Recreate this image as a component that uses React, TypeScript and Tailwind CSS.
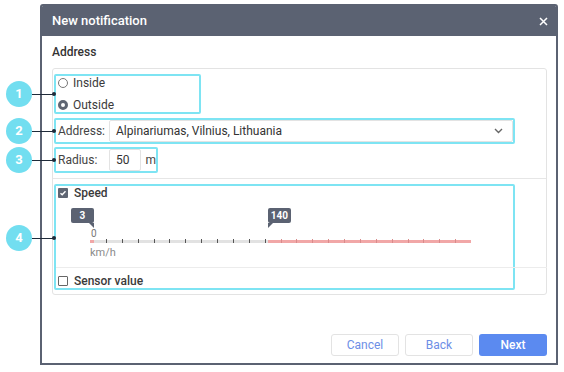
import React from 'react';

const MAX_SPEED = 300;
const SPEED_FROM = 3;
const SPEED_TO = 140;
const TICKS = 24;

const callouts = [
  { n: 1, y: 94 },
  { n: 2, y: 131 },
  { n: 3, y: 160 },
  { n: 4, y: 238 },
];

function Radio({ checked, label }: { checked?: boolean; label: string }) {
  return (
    <div className="flex h-[14px] items-center gap-[5px]">
      {checked ? (
        <span className="h-[10px] w-[10px] rounded-full border-[3px] border-[#5f6673] bg-white" />
      ) : (
        <span className="h-[10px] w-[10px] rounded-full border border-[#777] bg-white" />
      )}
      <span className="text-[12px] text-[#3a3a3a]">{label}</span>
    </div>
  );
}

function Checkbox({ checked, label }: { checked?: boolean; label: string }) {
  return (
    <div className="flex h-[14px] items-center gap-[6px]">
      {checked ? (
        <span className="flex h-[10px] w-[10px] items-center justify-center rounded-[1px] bg-[#5f6673]">
          <svg width="8" height="8" viewBox="0 0 8 8">
            <path d="M1.5 4.2 L3.2 5.8 L6.5 2.3" fill="none" stroke="#fff" strokeWidth="1.4" />
          </svg>
        </span>
      ) : (
        <span className="h-[10px] w-[10px] rounded-[1px] border border-[#666] bg-white" />
      )}
      <span className="text-[12px] font-medium text-[#3a3a3a]">{label}</span>
    </div>
  );
}

function SpeedSlider() {
  const fromPct = (SPEED_FROM / MAX_SPEED) * 100;
  const toPct = (SPEED_TO / MAX_SPEED) * 100;

  return (
    <div className="relative ml-[32px] h-[67px] w-[381px]">
      {/* from tooltip */}
      <div className="absolute top-[8px]" style={{ right: `${100 - fromPct}%` }}>
        <div className="h-[15px] min-w-[23px] rounded-[2px] bg-[#5b6272] px-[3px] text-center text-[10px] font-bold leading-[15px] text-white">
          {SPEED_FROM}
        </div>
        <div className="ml-auto h-0 w-0 border-l-[5px] border-t-[5px] border-l-transparent border-t-[#5b6272]" />
      </div>
      {/* to tooltip */}
      <div className="absolute top-[8px]" style={{ left: `${toPct}%` }}>
        <div className="h-[15px] min-w-[23px] rounded-[2px] bg-[#5b6272] px-[3px] text-center text-[10px] font-bold leading-[15px] text-white">
          {SPEED_TO}
        </div>
        <div className="h-0 w-0 border-r-[5px] border-t-[5px] border-r-transparent border-t-[#5b6272]" />
      </div>

      <span className="absolute left-[1px] top-[28px] text-[10px] leading-[12px] text-[#777]">0</span>

      <div className="absolute left-0 right-0 top-[40px] h-[3px] bg-[#e2e2e2]">
        <div className="absolute left-0 top-0 h-full bg-[#f1a7a7]" style={{ width: `${fromPct}%` }} />
        <div className="absolute right-0 top-0 h-full bg-[#f1a7a7]" style={{ left: `${toPct}%` }} />
        {Array.from({ length: TICKS - 1 }, (_, i) => {
          const pos = ((i + 1) / TICKS) * 100;
          const onRed = pos > toPct;
          return (
            <span
              key={i}
              className={
                onRed
                  ? 'absolute top-[-1px] h-[4px] w-px bg-[#d98b8b]'
                  : 'absolute top-[-1px] h-[4px] w-px bg-[#555]'
              }
              style={{ left: `${pos}%` }}
            />
          );
        })}
      </div>

      <span className="absolute left-0 top-[46px] text-[11px] leading-[13px] text-[#8a8a8a]">km/h</span>
    </div>
  );
}

export default function App() {
  return (
    <div
      className="relative h-[372px] w-[564px] overflow-hidden bg-white pl-[40px] pt-[4px]"
      style={{ fontFamily: 'Roboto, "Liberation Sans", sans-serif' }}
    >
      <div className="flex h-[361px] w-[518px] flex-col overflow-hidden rounded-t-[3px] border-2 border-[#5b6272]">
        {/* header */}
        <div className="flex h-[30px] shrink-0 items-center justify-between bg-[#5b6272] pl-[10px] pr-[8px]">
          <span className="text-[13px] font-medium text-white">New notification</span>
          <svg width="9" height="9" viewBox="0 0 9 9">
            <path d="M1 1 L8 8 M8 1 L1 8" stroke="#fff" strokeWidth="1.5" />
          </svg>
        </div>

        <div className="flex flex-1 flex-col bg-white pl-[10px] pr-[9px]">
          <div className="mb-[8px] mt-[8px] h-[16px] text-[12px] font-medium leading-[16px] text-[#333]">
            Address
          </div>

          <div className="flex flex-col rounded-[3px] border border-[#e3e3e3] pb-[4px] pt-[5px]">
            {/* 1 */}
            <div className="ml-[1px] flex h-[40px] w-[147px] flex-col justify-center gap-[8px] rounded-[2px] border-2 border-[#7ee4f3] pl-[2px]">
              <Radio label="Inside" />
              <Radio checked label="Outside" />
            </div>

            {/* 2 */}
            <div className="ml-[1px] mt-[4px] flex h-[26px] w-[461px] items-center rounded-[2px] border-2 border-[#7ee4f3] pl-[2px]">
              <span className="w-[51px] shrink-0 text-[12px] text-[#444]">Address:</span>
              <div className="flex h-[22px] flex-1 items-center justify-between rounded-[2px] border border-[#e3e3e3] pl-[6px] pr-[9px]">
                <span className="text-[12px] text-[#333]">Alpinariumas, Vilnius, Lithuania</span>
                <svg width="9" height="6" viewBox="0 0 9 6">
                  <path d="M1 1 L4.5 4.5 L8 1" fill="none" stroke="#666" strokeWidth="1.4" />
                </svg>
              </div>
            </div>

            {/* 3 */}
            <div className="ml-[1px] mt-[3px] flex h-[26px] w-[104px] items-center rounded-[2px] border-2 border-[#7ee4f3] pl-[2px]">
              <span className="w-[51px] shrink-0 text-[12px] text-[#444]">Radius:</span>
              <div className="flex h-[22px] w-[34px] items-center rounded-[2px] border border-[#e3e3e3] pl-[6px]">
                <span className="text-[12px] text-[#333]">50</span>
              </div>
              <span className="ml-[4px] text-[12px] text-[#444]">m</span>
            </div>

            <div className="mt-[5px] h-px bg-[#e6e6e6]" />

            {/* 4 */}
            <div className="ml-[1px] mt-[5px] flex w-[461px] flex-col rounded-[2px] border-2 border-[#7ee4f3] pl-[2px]">
              <Checkbox checked label="Speed" />
              <SpeedSlider />
              <div className="-ml-[2px] -mr-[34px] h-px bg-[#ececec]" />
              <div className="mt-[6px]">
                <Checkbox label="Sensor value" />
              </div>
            </div>
          </div>

          {/* footer */}
          <div className="mt-auto flex justify-end gap-[6px] pb-[7px]">
            <button className="h-[22px] w-[68px] rounded-[3px] border border-[#e3e3e3] bg-white text-[12px] text-[#6d8ee6]">
              Cancel
            </button>
            <button className="h-[22px] w-[68px] rounded-[3px] border border-[#e3e3e3] bg-white text-[12px] text-[#6d8ee6]">
              Back
            </button>
            <button className="h-[22px] w-[68px] rounded-[3px] bg-[#5b8af0] text-[12px] font-medium text-white">
              Next
            </button>
          </div>
        </div>
      </div>

      {/* annotation callouts */}
      {callouts.map((c) => (
        <div key={c.n} className="absolute left-[6px] flex items-center" style={{ top: c.y - 13 }}>
          <div className="flex h-[26px] w-[26px] items-center justify-center rounded-full bg-[#72def0] text-[13px] font-bold text-white">
            {c.n}
          </div>
          <div className="h-px w-[22px] bg-[#1f2b3a]" />
          <div className="-ml-[2px] h-[4px] w-[4px] rounded-full bg-[#1f2b3a]" />
        </div>
      ))}
    </div>
  );
}
